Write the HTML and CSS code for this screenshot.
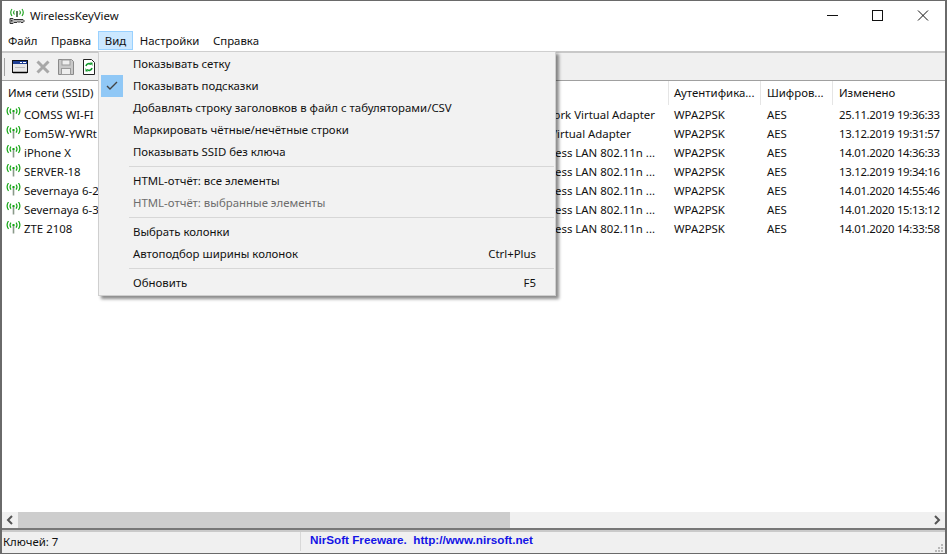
FILE: index.html
```html
<!DOCTYPE html>
<html lang="ru">
<head>
<meta charset="utf-8">
<title>WirelessKeyView</title>
<link rel="stylesheet" href="styles.css">
</head>
<body>
<div class="window">
  <div class="titlebar">
    <svg class="appicon" width="16" height="16" viewBox="0 0 16 16"><g fill="none" stroke="#1aa01a" stroke-width="1.100"><path d="M5.500 2.500a3 3 0 0 0 0 4M3 1a6 6 0 0 0 0 7M10.500 2.500a3 3 0 0 1 0 4M13 1a6 6 0 0 1 0 7"/></g><rect x="7" y="3" width="2" height="6" fill="#5c7a5c"/><path d="M1 10.500h3l1 1h9l1 1v1l-1 1h-2l-1-1-1 1-1-1-1 1H5l-1 1H1z" fill="#b4b4b4" stroke="#333"/><rect x="2" y="12" width="1.500" height="1.500" fill="#333"/></svg>
    <span class="apptitle">WirelessKeyView</span>
    <div class="winbtns">
      <svg class="winbtn" width="45" height="30" viewBox="0 0 45 30"><path d="M17 14.500h11" stroke="#111" fill="none"/></svg>
      <svg class="winbtn" width="45" height="30" viewBox="0 0 45 30"><rect x="17.500" y="9.500" width="10" height="10" stroke="#111" fill="none"/></svg>
      <svg class="winbtn" width="45" height="30" viewBox="0 0 45 30"><path d="M18 9.500l10 10M28 9.500l-10 10" stroke="#111" fill="none"/></svg>
    </div>
  </div>
  <div class="menubar">
    <span class="mi">Файл</span><span class="mi">Правка</span><span class="mi active">Вид</span><span class="mi">Настройки</span><span class="mi">Справка</span>
  </div>
  <div class="toolbar">
    <span class="grip"></span>
    <svg class="tool" width="16" height="16" viewBox="0 0 16 16"><rect x=".5" y="1.500" width="15" height="12" fill="#e8e8e8" stroke="#111"/><rect x="1" y="2" width="14" height="3" fill="#1f3f94"/><rect x="8" y="3" width="2" height="1" fill="#fff"/><rect x="11" y="3" width="3" height="1" fill="#fff"/><path d="M1 13.500h14" stroke="#000" stroke-width="1.500"/><path d="M3 8.500h10" stroke="#bdbdbd"/></svg>
    <svg class="tool" width="16" height="16" viewBox="0 0 16 16"><path d="M2.500 2.500l11 11M13.500 2.500l-11 11" stroke="#a8a8a8" stroke-width="3" fill="none"/></svg>
    <svg class="tool" width="16" height="16" viewBox="0 0 16 16"><path d="M.5 .5h13l2 2v13H.5z" fill="#c8c8c8" stroke="#8a8a8a"/><rect x="4" y="1" width="8" height="5" fill="#eee" stroke="#999"/><rect x="3.500" y="9.500" width="9" height="6" fill="#eee" stroke="#999"/></svg>
    <svg class="tool" width="16" height="16" viewBox="0 0 16 16"><path d="M2.500 .5h8l3 3v12h-11z" fill="#fff" stroke="#222"/><path d="M5 7a3 3 0 0 1 5-1.500M11 9a3 3 0 0 1-5 1.500" stroke="#129a2c" stroke-width="1.600" fill="none"/><path d="M9 3.500h2.500V7zM7 12.500H4.500V9z" fill="#129a2c"/></svg>
  </div>
  <div class="list">
    <div class="row head">
      <span class="c c1">Имя сети (SSID)</span><span class="c c2"></span><span class="c c3">Аутентифика...</span><span class="c c4">Шифров...</span><span class="c c5">Изменено</span>
    </div>
    <div class="rows">
      <div class="row"><span class="c c1"><svg class="wifi" width="16" height="13" viewBox="0 0 16 13"><use href="#w"/></svg>COMSS WI-FI</span><span class="c c2">Hosted Network Virtual Adapter</span><span class="c c3">WPA2PSK</span><span class="c c4">AES</span><span class="c c5">25.11.2019 19:36:33</span></div>
      <div class="row"><span class="c c1"><svg class="wifi" width="16" height="13" viewBox="0 0 16 13"><use href="#w"/></svg>Eom5W-YWRt</span><span class="c c2 short">Direct Virtual Adapter</span><span class="c c3">WPA2PSK</span><span class="c c4">AES</span><span class="c c5">13.12.2019 19:31:57</span></div>
      <div class="row"><span class="c c1"><svg class="wifi" width="16" height="13" viewBox="0 0 16 13"><use href="#w"/></svg>iPhone X</span><span class="c c2">Wireless LAN 802.11n ...</span><span class="c c3">WPA2PSK</span><span class="c c4">AES</span><span class="c c5">14.01.2020 14:36:33</span></div>
      <div class="row"><span class="c c1"><svg class="wifi" width="16" height="13" viewBox="0 0 16 13"><use href="#w"/></svg>SERVER-18</span><span class="c c2">Wireless LAN 802.11n ...</span><span class="c c3">WPA2PSK</span><span class="c c4">AES</span><span class="c c5">13.12.2019 19:34:16</span></div>
      <div class="row"><span class="c c1"><svg class="wifi" width="16" height="13" viewBox="0 0 16 13"><use href="#w"/></svg>Severnaya 6-2</span><span class="c c2">Wireless LAN 802.11n ...</span><span class="c c3">WPA2PSK</span><span class="c c4">AES</span><span class="c c5">14.01.2020 14:55:46</span></div>
      <div class="row"><span class="c c1"><svg class="wifi" width="16" height="13" viewBox="0 0 16 13"><use href="#w"/></svg>Severnaya 6-3</span><span class="c c2">Wireless LAN 802.11n ...</span><span class="c c3">WPA2PSK</span><span class="c c4">AES</span><span class="c c5">14.01.2020 15:13:12</span></div>
      <div class="row"><span class="c c1"><svg class="wifi" width="16" height="13" viewBox="0 0 16 13"><use href="#w"/></svg>ZTE 2108</span><span class="c c2">Wireless LAN 802.11n ...</span><span class="c c3">WPA2PSK</span><span class="c c4">AES</span><span class="c c5">14.01.2020 14:33:58</span></div>
    </div>
    <div class="hscroll">
      <svg width="16" height="16" viewBox="0 0 16 16"><path d="M10 4L6 8l4 4" stroke="#555" stroke-width="2" fill="none"/></svg>
      <div class="track"><div class="thumb"></div></div>
      <svg width="16" height="16" viewBox="0 0 16 16"><path d="M6 4l4 4-4 4" stroke="#555" stroke-width="2" fill="none"/></svg>
    </div>
  </div>
  <div class="status">
    <div class="s1">Ключей: 7</div>
    <div class="s2">NirSoft Freeware.&nbsp; http://www.nirsoft.net</div>
    <svg class="sizegrip" width="9" height="9" viewBox="0 0 9 9"><path d="M6 0h2v2H6zM3 3h2v2H3zM6 3h2v2H6zM0 6h2v2H0zM3 6h2v2H3zM6 6h2v2H6z" fill="#b8b8b8"/></svg>
  </div>
</div>

<div class="menu">
  <div class="item">Показывать сетку</div>
  <div class="item"><span class="check"><svg width="12" height="10" viewBox="0 0 12 10"><path d="M1 5l3 3 7-7" stroke="#444" stroke-width="1.400" fill="none"/></svg></span>Показывать подсказки</div>
  <div class="item">Добавлять строку заголовков в файл с табуляторами/CSV</div>
  <div class="item">Маркировать чётные/нечётные строки</div>
  <div class="item">Показывать SSID без ключа</div>
  <div class="sep"></div>
  <div class="item">HTML-отчёт: все элементы</div>
  <div class="item off">HTML-отчёт: выбранные элементы</div>
  <div class="sep"></div>
  <div class="item">Выбрать колонки</div>
  <div class="item">Автоподбор ширины колонок<span class="key">Ctrl+Plus</span></div>
  <div class="sep"></div>
  <div class="item">Обновить<span class="key">F5</span></div>
</div>

<svg class="defs" width="0" height="0"><defs><g id="w" fill="none" stroke="#14a514" stroke-width="1.200"><path d="M5 1.500a4 4 0 0 0 0 5M2.500 0a7 7 0 0 0 0 8M10 1.500a4 4 0 0 1 0 5M12.500 0a7 7 0 0 1 0 8"/><path d="M7.500 4v8.500" stroke="#8a9a8a" stroke-width="1.600"/><rect x="6.500" y="3" width="2" height="2" fill="#14a514" stroke="none"/></g></defs></svg>
</body>
</html>
```
FILE: styles.css
```css
* { box-sizing: border-box; }
html, body { margin: 0; height: 100%; overflow: hidden; }
body { font-family: "Noto Sans", "Open Sans", sans-serif; font-size: 11.4px; color: #111; background: #fff; }
.window { width: 947px; height: 554px; display: flex; flex-direction: column; border: 2px solid #6a6a6a; border-top-width: 1px; border-bottom-width: 1px; }
.titlebar { height: 30px; flex: none; display: flex; align-items: center; background: #fff; padding-left: 7px; }
.appicon { margin-right: 5px; flex: none; }
.apptitle { padding-bottom: 2px; }
.winbtns { margin-left: auto; display: flex; align-self: flex-start; }
.winbtn { display: block; }
.menubar { height: 20px; flex: none; display: flex; align-items: flex-start; background: #fff; }
.mi { height: 19px; line-height: 18px; padding: 0 5.800px; border: 1px solid transparent; }
.mi:first-child { margin-left: -.8px; }
.mi.active { background: #cce8ff; border-color: #99d1ff; }
.toolbar { height: 30px; flex: none; display: flex; align-items: center; gap: 6px; padding-left: 2px; background: #f0f0f0; border-top: 2px solid #c8c8c8; border-bottom: 1px solid #a0a0a0; }
.grip { width: 1px; height: 18px; background: #a0a0a0; margin-right: 1px; }
.tool { flex: none; }
.tool + .tool { margin-left: 1px; }
.list { flex: 1; min-height: 0; display: flex; flex-direction: column; background: #fff; }
.row { display: flex; height: 19px; align-items: center; white-space: nowrap; }
.head { height: 24px; flex: none; }
.head .c { height: 24px; line-height: 23px; border-right: 1px solid #e5e5e5; }
.rows { flex: 1; min-height: 0; }
.c { display: block; overflow: hidden; flex: none; }
.c1 { width: 198px; padding-left: 6px; }
.rows .c1 { padding-left: 4px; display: flex; align-items: center; }
.c2 { width: 469px; padding-right: 14px; text-align: right; }
.c2.short { padding-right: 38px; }
.c3 { width: 92px; padding-left: 5px; }
.c4 { width: 72px; padding-left: 6px; }
.c5 { width: 112px; padding-left: 6px; border-right: 0 !important; }
.rows .c5 { letter-spacing: -.3px; }
.wifi { flex: none; margin-right: 2px; margin-top: -2px; }
.hscroll { height: 16px; flex: none; display: flex; background: #f0f0f0; }
.hscroll svg { flex: none; }
.track { flex: 1; background: #f0f0f0; }
.thumb { width: 492px; height: 16px; background: #cdcdcd; }
.status { position: relative; height: 25px; flex: none; display: flex; background: #f0f0f0; border-top: 2px solid #777; box-shadow: inset 0 2px 0 #cacaca; }
.s1 { width: 298px; padding: 4px 0 0 1px; }
.s2 { margin-top: 2px; padding: 1px 0 0 9px; border-left: 1px solid #d8d8d8; height: 19px; color: #1414e6; font-family: "Liberation Sans", sans-serif; font-weight: 700; font-size: 11.700px; }
.sizegrip { position: absolute; right: 1px; bottom: 0; }
.menu { position: absolute; left: 98px; top: 51px; width: 458px; padding: 1px 1px 1px 2px; background: #f2f2f2; border: 1px solid #cfcfcf; box-shadow: 3px 3px 3px rgba(0,0,0,.45); }
.item { position: relative; display: flex; justify-content: space-between; height: 22px; line-height: 21px; padding: 0 18px 0 32px; }
.off { color: #6d6d6d; }
.check { position: absolute; left: 0; top: 0; width: 22px; height: 22px; background: #90c8f6; display: flex; align-items: center; justify-content: center; }
.sep { height: 1px; margin: 3px 0 3px 28px; background: #d7d7d7; }
.key { margin-left: auto; }
.defs { position: absolute; }
```
